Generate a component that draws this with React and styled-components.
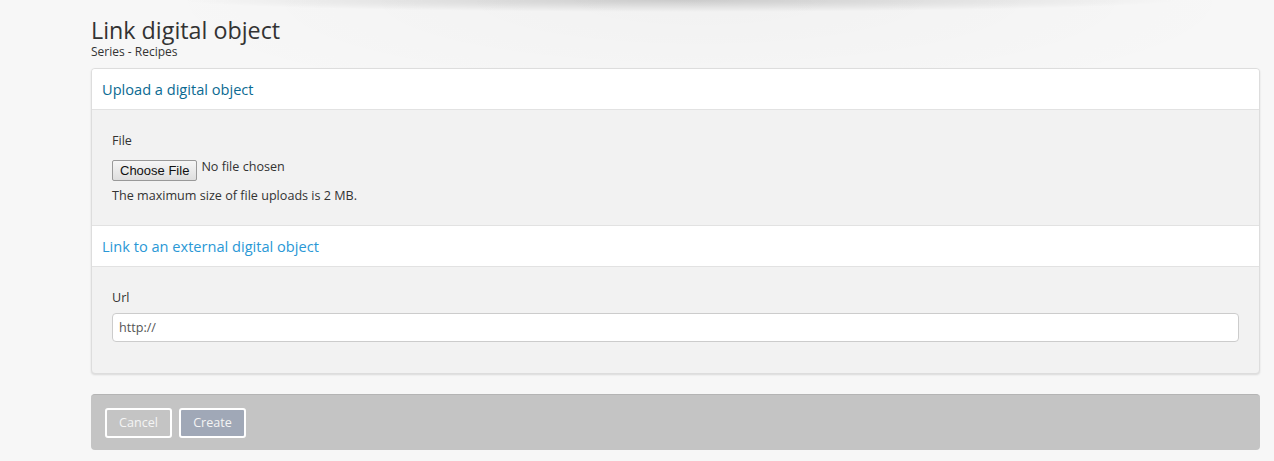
import React from 'react';
import styled, { createGlobalStyle } from 'styled-components';

const GlobalStyle = createGlobalStyle`
  html, body {
    margin: 0;
    padding: 0;
    background: #f7f7f7;
  }
  body {
    font-family: "Open Sans", "Liberation Sans", sans-serif;
    color: #333;
  }
`;

const App = () => {
  return (
    <Page>
      <GlobalStyle />
      <Main>
        {/* title */}
        <TitleBlock>
          <Title>Link digital object</Title>
          <Subtitle>Series - Recipes</Subtitle>
        </TitleBlock>

        {/* fieldsets */}
        <Panel>
          <Section>
            <SectionHeader>Upload a digital object</SectionHeader>
            <SectionBody>
              <Label>File</Label>
              <FileRow>
                <FileButton type="button">Choose File</FileButton>
                <FileName>No file chosen</FileName>
              </FileRow>
              <Help>The maximum size of file uploads is 2 MB.</Help>
            </SectionBody>
          </Section>
          <Section>
            <SectionHeader $light>Link to an external digital object</SectionHeader>
            <SectionBody $tall>
              <Label $tight>Url</Label>
              <UrlInput type="text" defaultValue="http://" />
            </SectionBody>
          </Section>
        </Panel>

        {/* actions */}
        <Actions>
          <ActionButton type="button">Cancel</ActionButton>
          <ActionButton type="button" $primary>Create</ActionButton>
        </Actions>
      </Main>
    </Page>
  );
};

const Page = styled.div`
  min-height: 461px;
  background:
    radial-gradient(ellipse 500px 12px at 680px 0, rgba(0, 0, 0, 0.16), rgba(0, 0, 0, 0) 100%),
    radial-gradient(ellipse 560px 110px at 700px 0, rgba(0, 0, 0, 0.025), rgba(0, 0, 0, 0) 100%),
    #f7f7f7;
  overflow: hidden;
`;

const Main = styled.main`
  width: 1169px;
  margin: 0 0 0 91px;
  padding-top: 17px;
`;

const TitleBlock = styled.div`
  margin-bottom: 9px;
`;

const Title = styled.h1`
  margin: 0;
  font-size: 23.3px;
  font-weight: 400;
  line-height: 27px;
  color: #333;
`;

const Subtitle = styled.div`
  font-size: 12px;
  line-height: 14px;
  margin-top: 1px;
  color: #333;
`;

const Panel = styled.div`
  border: 1px solid #ddd;
  border-radius: 4px;
  background: #f2f2f2;
  box-shadow: 0 1px 2px rgba(0, 0, 0, 0.12);
  overflow: hidden;
`;

const Section = styled.fieldset`
  margin: 0;
  padding: 0;
  border: 0;
  min-width: 0;
`;

const SectionHeader = styled.div`
  background: #fff;
  height: 40px;
  padding: 0 10px;
  display: flex;
  align-items: center;
  font-size: 14.6px;
  color: ${(p) => (p.$light ? '#2a98d6' : '#0b6a92')};
  border-bottom: 1px solid #e2e2e2;
`;

const SectionBody = styled.div`
  padding: 22px 20px ${(p) => (p.$tall ? '31px' : '21px')};
  border-bottom: 1px solid #e2e2e2;

  ${Section}:last-child & {
    border-bottom: 0;
  }
`;

const Label = styled.label`
  display: block;
  font-size: 12.6px;
  line-height: 17px;
  margin-bottom: ${(p) => (p.$tight ? '7px' : '11px')};
  color: #333;
`;

const FileRow = styled.div`
  display: flex;
  align-items: flex-start;
  gap: 4px;
`;

const FileButton = styled.button`
  font-family: "Liberation Sans", Arial, sans-serif;
  font-size: 13px;
  height: 21px;
  padding: 0 7px;
  border: 1px solid #999;
  border-radius: 2px;
  background: linear-gradient(#f6f6f6, #dedede);
  color: #111;
`;

const FileName = styled.span`
  font-size: 12.6px;
  line-height: 14px;
  color: #333;
`;

const Help = styled.div`
  font-size: 12.6px;
  line-height: 17px;
  margin-top: 6px;
  color: #333;
`;

const UrlInput = styled.input`
  display: block;
  box-sizing: border-box;
  width: 100%;
  height: 29px;
  padding: 0 6px;
  font-family: "Open Sans", "Liberation Sans", sans-serif;
  font-size: 12.6px;
  color: #555;
  background: #fff;
  border: 1px solid #ccc;
  border-radius: 4px;
  outline: none;
`;

const Actions = styled.section`
  margin-top: 20px;
  background: #c4c4c4;
  border-top: 1px solid #b4b4b4;
  border-radius: 4px;
  height: 55px;
  padding: 0 14px;
  display: flex;
  align-items: center;
  gap: 7px;
`;

const ActionButton = styled.button`
  font-family: "Open Sans", "Liberation Sans", sans-serif;
  font-size: 12.6px;
  height: 30px;
  width: 67px;
  padding: 0;
  border: 2px solid #fff;
  border-radius: 3px;
  color: #f4f4f4;
  background: ${(p) => (p.$primary ? '#a0a8b7' : 'transparent')};
  cursor: pointer;
`;

export default App;
